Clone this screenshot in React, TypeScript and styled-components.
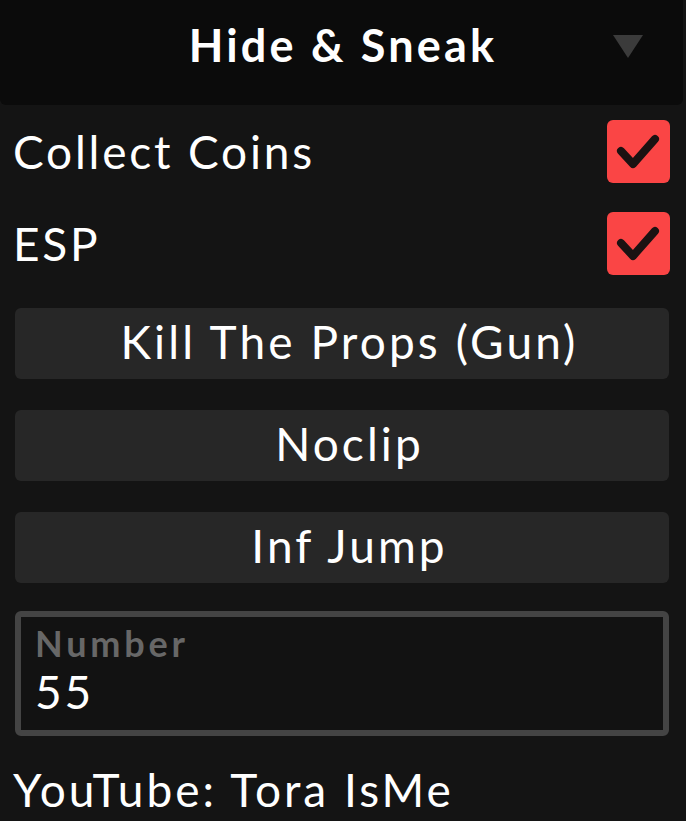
import React from "react";
import styled, { createGlobalStyle } from "styled-components";

const Global = createGlobalStyle`
  html, body { margin: 0; padding: 0; background: #141414; }
  body { font-family: Lato, "Noto Sans", sans-serif; color: #fff; }
`;

const Page = styled.div`
  width: 686px;
  min-height: 821px;
  background: #141414;
  display: flex;
  flex-direction: column;
`;

const Header = styled.header`
  height: 105px;
  margin-right: 3px;
  background: #0b0b0b;
  border-radius: 0 0 6px 6px;
  display: grid;
  grid-template-columns: 1fr auto 1fr;
  align-items: center;
`;

const Title = styled.h1`
  grid-column: 2;
  margin: 0 0 16px 3px;
  font-family: Lato, sans-serif;
  font-weight: 700;
  font-size: 45px;
  letter-spacing: 3.2px;
  color: #fff;
`;

const Caret = styled.div`
  grid-column: 3;
  justify-self: end;
  margin: 0 40px 12px 0;
  width: 0;
  height: 0;
  border-left: 15px solid transparent;
  border-right: 15px solid transparent;
  border-top: 23px solid #3b3b3b;
`;

const Row = styled.div`
  height: 92px;
  padding: 0 16px 0 13px;
  display: flex;
  align-items: center;
  justify-content: space-between;
`;

const Label = styled.span`
  font-size: 46px;
  font-weight: 400;
  letter-spacing: 2.8px;
  color: #fff;
`;

const Check = styled.div`
  width: 63px;
  height: 63px;
  border-radius: 6px;
  background: #fa4545;
  display: flex;
  align-items: center;
  justify-content: center;
`;

const Buttons = styled.div`
  margin: 19px 17px 0 15px;
  display: flex;
  flex-direction: column;
  gap: 31px;
`;

const Button = styled.button`
  height: 71px;
  border: none;
  border-radius: 6px;
  background: #272727;
  color: #fff;
  font-family: Lato, sans-serif;
  font-size: 46px;
  letter-spacing: 3.1px;
  padding: 0 0 4px 15px;
`;

const InputBox = styled.div`
  margin: 28px 17px 0 15px;
  height: 125px;
  box-sizing: border-box;
  border: 6px solid #444;
  border-radius: 6px;
  background: #121212;
  padding: 7px 0 0 14px;
  display: flex;
  flex-direction: column;
`;

const InputLabel = styled.span`
  font-size: 36px;
  font-weight: 700;
  letter-spacing: 3.8px;
  color: #676767;
  line-height: 38px;
`;

const InputValue = styled.span`
  font-size: 46px;
  letter-spacing: 2.8px;
  color: #fff;
  line-height: 52px;
  margin-top: 4px;
`;

const Footer = styled.div`
  margin: 26px 0 0 13px;
  font-size: 46px;
  letter-spacing: 3px;
  color: #fff;
`;

const CheckIcon = () => (
  <svg width="63" height="63" viewBox="0 0 63 63">
    <path d="M14 31 L26 44 L48 19" fill="none" stroke="#1b1212" strokeWidth="8" strokeLinecap="round" strokeLinejoin="round" />
  </svg>
);

export default function App() {
  return (
    <>
      <Global />
      <Page>
        <Header>
          <Title>Hide &amp; Sneak</Title>
          <Caret />
        </Header>
        <Row>
          <Label>Collect Coins</Label>
          <Check><CheckIcon /></Check>
        </Row>
        <Row>
          <Label>ESP</Label>
          <Check><CheckIcon /></Check>
        </Row>
        <Buttons>
          <Button>Kill The Props (Gun)</Button>
          <Button>Noclip</Button>
          <Button>Inf Jump</Button>
        </Buttons>
        <InputBox>
          <InputLabel>Number</InputLabel>
          <InputValue>55</InputValue>
        </InputBox>
        <Footer>YouTube: Tora IsMe</Footer>
      </Page>
    </>
  );
}
